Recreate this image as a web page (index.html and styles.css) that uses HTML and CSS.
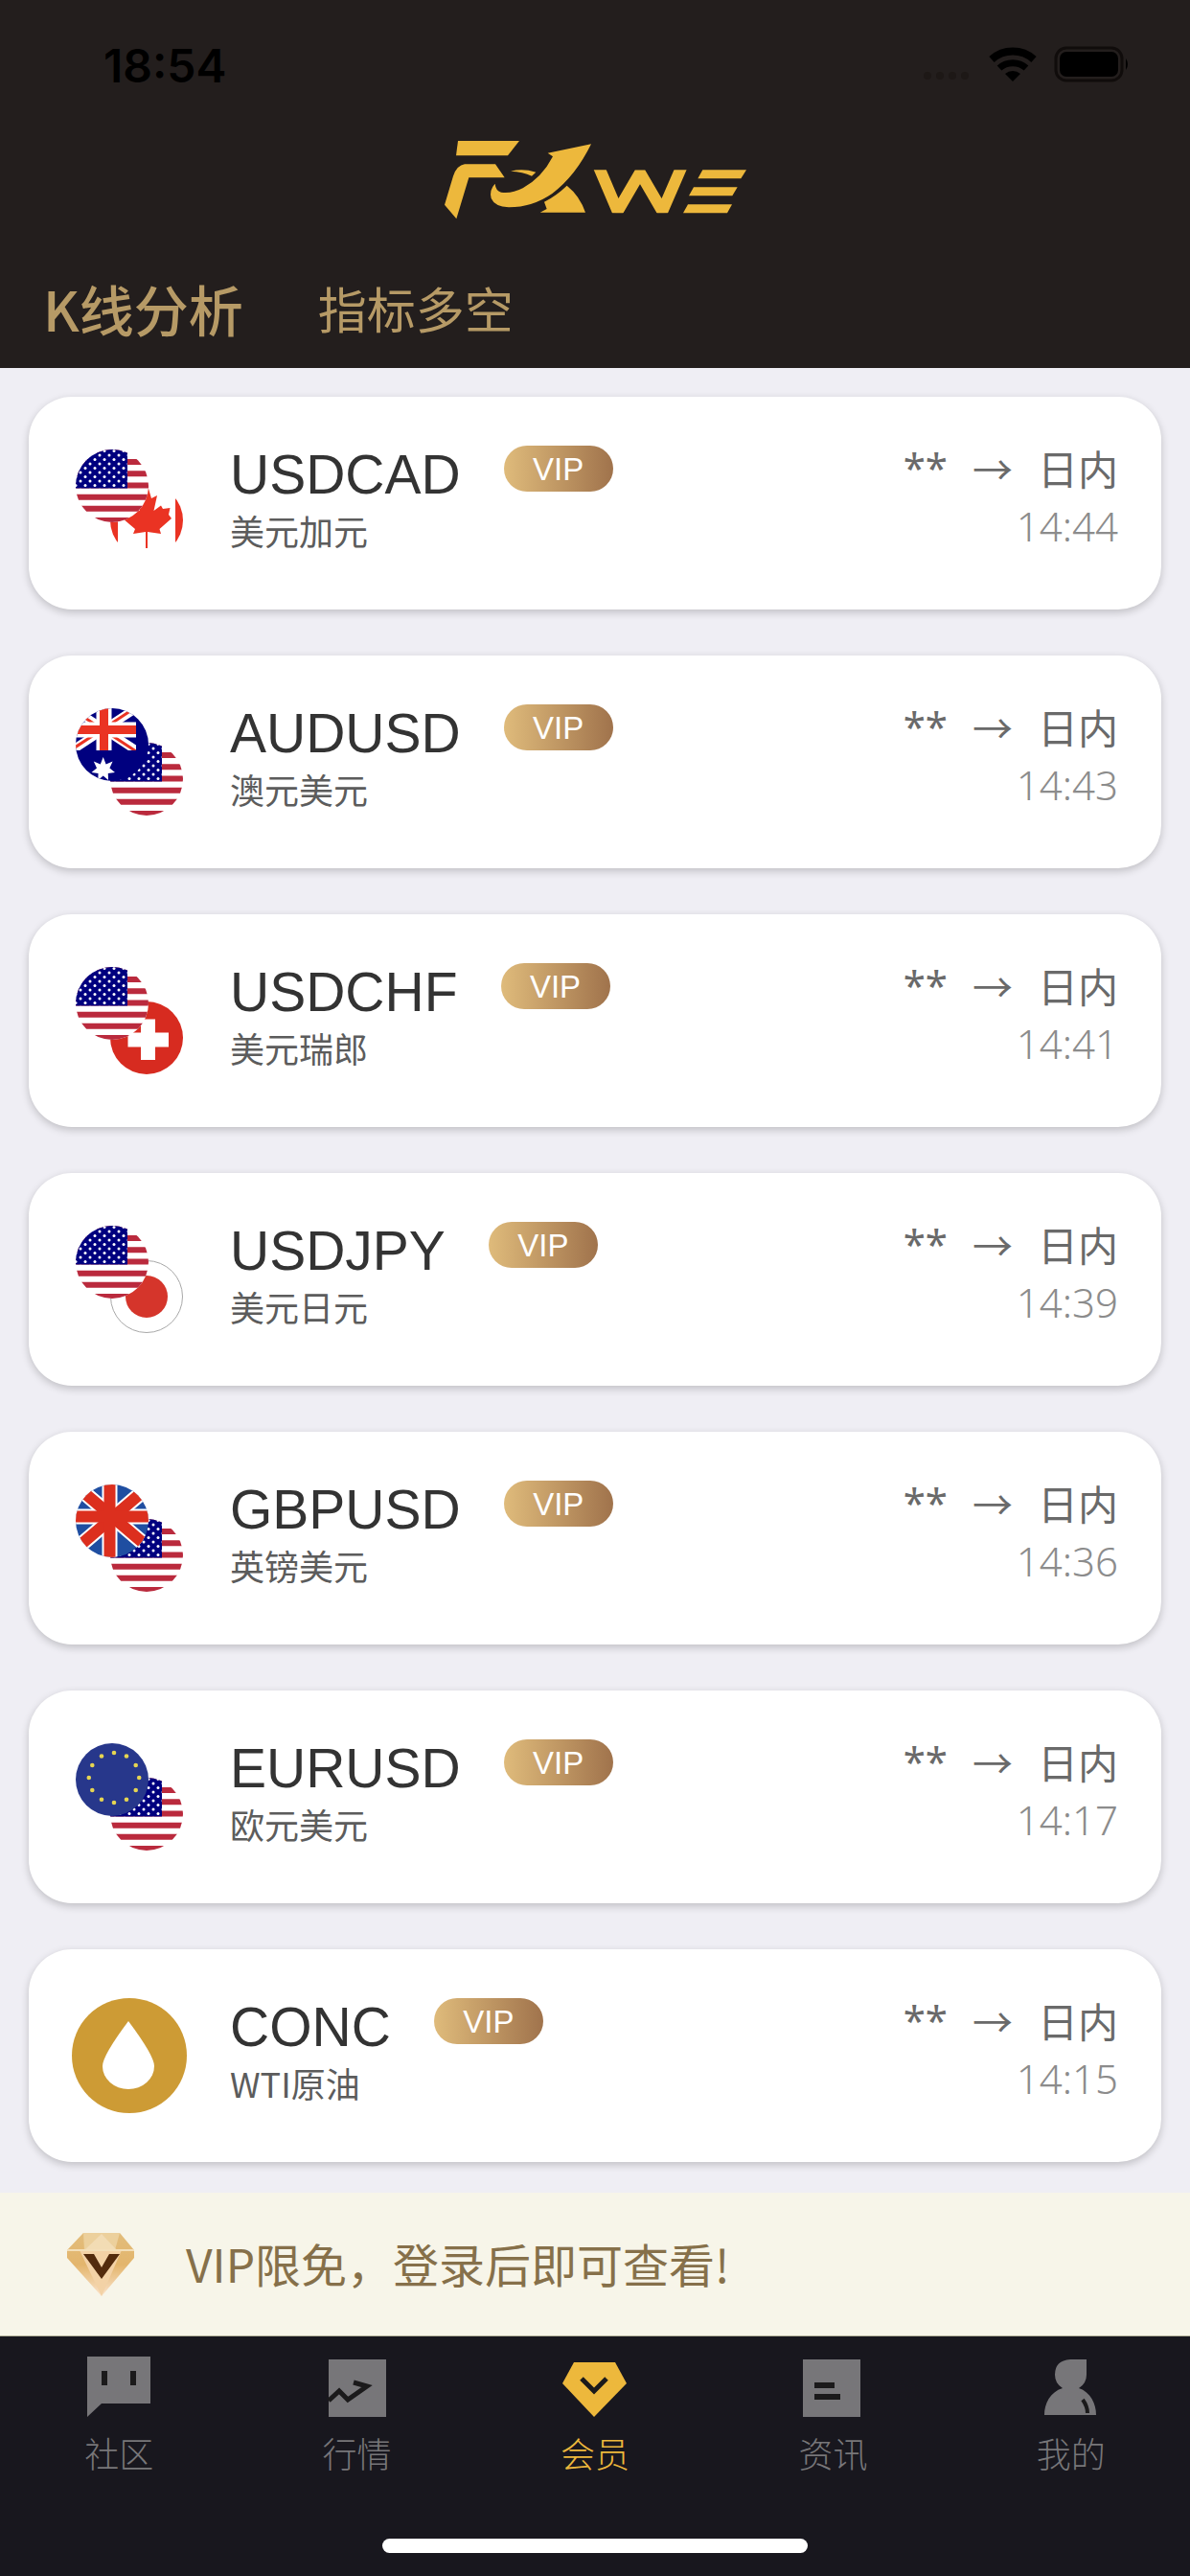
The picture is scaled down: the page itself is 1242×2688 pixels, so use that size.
FILE: index.html
```
<!DOCTYPE html>
<html lang="zh-CN">
<head>
  <meta charset="UTF-8" />
  <meta name="viewport" content="width=device-width, initial-scale=1" />
  <title>FXWE</title>
  <link rel="stylesheet" href="styles.css">
</head>
<body>

  <!-- Shared flags, every one is a 76x76 circle -->
  <svg class="defs" width="0" height="0" aria-hidden="true">
    <defs>
      <clipPath id="round"><circle cx="38" cy="38" r="38" /></clipPath>
      <clipPath id="canton"><rect x="0" y="0" width="63" height="44" /></clipPath>
      <clipPath id="band"><rect x="530" y="141" width="310" height="135" /></clipPath>
      <pattern id="stars" width="10" height="9" patternUnits="userSpaceOnUse">
        <circle cx="5" cy="6" r="1.5" fill="#fff" />
        <circle cx="0" cy="1.5" r="1.5" fill="#fff" />
        <circle cx="10" cy="1.5" r="1.5" fill="#fff" />
      </pattern>
      <linearGradient id="gold" x1="0" y1="0" x2="0" y2="1">
        <stop offset="0" stop-color="#e2bd7c" />
        <stop offset="0.5" stop-color="#e3b56c" />
        <stop offset="1" stop-color="#fbe3cb" />
      </linearGradient>
    </defs>
    <symbol id="us" viewBox="0 0 76 76">
      <g clip-path="url(#round)">
        <rect width="76" height="76" fill="#fff" />
        <path d="M0 1H76M0 13H76M0 25.300H76M0 37.500H76M0 49.700H76M0 61.700H76M0 74H76" stroke="#ba2a3d" stroke-width="6.100" />
        <rect width="54" height="40.500" fill="#00007f" />
        <rect width="54" height="40.500" fill="url(#stars)" />
      </g>
    </symbol>
    <symbol id="ca" viewBox="0 0 76 76">
      <g clip-path="url(#round)" fill="#ea3323">
        <rect width="76" height="76" fill="#fff" />
        <rect width="8" height="76" />
        <rect x="68" width="8" height="76" />
        <path d="M38 -2L43 15L49 12L45.500 28L53 22.500L55 26L62.500 25L61 32L64 36L51.500 47L53 52L39 50V67H37V50L24 52L26 47L13 36L16 32L14 25L22 26L24 22.500L31 28L28.500 12L33 15Z" />
      </g>
    </symbol>
    <symbol id="au" viewBox="0 0 76 76">
      <g clip-path="url(#round)">
        <rect width="76" height="76" fill="#00007f" />
        <g clip-path="url(#canton)">
          <path d="M-4 0L63 44M63 0L-4 44" stroke="#fff" stroke-width="9" />
          <path d="M-4 1L63 45M63 -1L-4 43" stroke="#ea3323" stroke-width="3" />
          <path d="M29.500 0V44M0 22.500H63" stroke="#fff" stroke-width="16" />
          <path d="M29.500 0V44M0 22.500H63" stroke="#ea3323" stroke-width="9" />
        </g>
        <path d="M28.700 51L31.600 58.500L38.600 55.500L35.400 62.500L41 67L33.800 68L34 75L28.700 70.500L23.400 75L23.500 68L16.500 67L22 62.500L18.800 55.500L25.800 58.500Z" fill="#fff" />
      </g>
    </symbol>
    <symbol id="ch" viewBox="0 0 76 76">
      <circle cx="38" cy="38" r="38" fill="#d72b20" />
      <path d="M39.500 18.500V61M18.500 40H61" stroke="#fff" stroke-width="15" />
    </symbol>
    <symbol id="jp" viewBox="0 0 76 76">
      <circle cx="38" cy="38" r="37.500" fill="#fff" stroke="#a8a8a8" />
      <circle cx="38" cy="38" r="22" fill="#d5352b" />
    </symbol>
    <symbol id="gb" viewBox="0 0 76 76">
      <g clip-path="url(#round)">
        <rect width="76" height="76" fill="#1f4ea1" />
        <path d="M-6 -4L82 71M80 -1L-10 76" stroke="#fff" stroke-width="16" />
        <path d="M35.500 0V76M0 33.500H76" stroke="#fff" stroke-width="16" />
        <path d="M-6 -4L82 71M80 -1L-10 76" stroke="#dc2f1e" stroke-width="12" />
        <path d="M35.500 0V76M0 33.500H76" stroke="#dc2f1e" stroke-width="12" />
      </g>
    </symbol>
    <symbol id="eu" viewBox="0 0 76 76">
      <circle cx="38" cy="38" r="38" fill="#27378b" />
      <g fill="#e6d552">
        <circle cx="40" cy="10" r="2.300" /><circle cx="53" cy="13.500" r="2.300" />
        <circle cx="62.700" cy="23" r="2.300" /><circle cx="66.200" cy="36" r="2.300" />
        <circle cx="62.700" cy="49" r="2.300" /><circle cx="53" cy="58.700" r="2.300" />
        <circle cx="40" cy="62" r="2.300" /><circle cx="27" cy="58.700" r="2.300" />
        <circle cx="17.300" cy="49" r="2.300" /><circle cx="13.800" cy="36" r="2.300" />
        <circle cx="17.300" cy="23" r="2.300" /><circle cx="27" cy="13.500" r="2.300" />
      </g>
    </symbol>
  </svg>

  <header class="header">
    <div class="status">
      <span class="clock">18:54</span>
      <svg class="status-icons" viewBox="0 0 224 42" aria-hidden="true">
        <g fill="#1d1816">
          <circle cx="13" cy="34" r="4" /><circle cx="26" cy="34" r="4" />
          <circle cx="39" cy="34" r="4" /><circle cx="52" cy="34" r="4" />
        </g>
        <g fill="none" stroke="#000">
          <path d="M80 17A33 33 0 0 1 124 17" stroke-width="8" />
          <path d="M88 26A21 21 0 0 1 116 26" stroke-width="7" />
        </g>
        <path d="M94 32A12 12 0 0 1 110 32L102 40Z" />
        <rect x="147" y="5" width="69" height="34" rx="11" fill="none" stroke="#100c0b" stroke-width="3" />
        <rect x="151" y="9" width="61" height="26" rx="7" />
        <path d="M220 16Q224 22 220 28Z" />
      </svg>
    </div>
    <div class="logo-row">
      <!-- brand mark -->
      <svg class="logo" viewBox="75 50 945 246" role="img" aria-label="FXWE">
        <g fill="#edb83c">
          <path d="M117 50H309L273 96H111Z" />
          <path d="M138 123H234L263 165H151L112 294L75 250L102 160Q114 126 138 123Z" />
          <path d="M282 145Q320 135 361 148L348 160Q320 146 282 145Z" />
          <path d="M534 60L398 88L414 99Q380 165 320 198Q285 216 252 211Q235 206 233 184Q214 204 221 230Q232 256 276 258Q350 258 412 215Q485 160 534 60Z" />
          <path d="M458 190Q498 222 516 274H374L395 263L387 241Q425 222 458 190Z" />
          <path d="M883 141H1020L1003 168H868ZM855 195H992L976 222H840ZM837 249H975L960 276H822Z" />
        </g>
        <path clip-path="url(#band)" d="M556 127L617 270L687 150L757 270L819 127" fill="none" stroke="#edb83c" stroke-width="36" stroke-linejoin="bevel" />
      </svg>
    </div>
    <nav class="tabs">
      <button class="tab active">K线分析</button>
      <button class="tab">指标多空</button>
    </nav>
  </header>

  <main class="list">
    <article class="card">
      <svg class="pair" viewBox="0 0 120 120"><use href="#ca" x="40" y="40" width="76" height="76" /><use href="#us" x="4" y="4" width="76" height="76" /></svg>
      <div class="info">
        <div class="title"><h2>USDCAD</h2><span class="vip">VIP</span></div>
        <p>美元加元</p>
      </div>
      <div class="signal">
        <div class="trend"><span class="mask">**</span><span>→</span><span>日内</span></div>
        <time>14:44</time>
      </div>
    </article>
    <article class="card">
      <svg class="pair" viewBox="0 0 120 120"><use href="#us" x="40" y="40" width="76" height="76" /><use href="#au" x="4" y="4" width="76" height="76" /></svg>
      <div class="info">
        <div class="title"><h2>AUDUSD</h2><span class="vip">VIP</span></div>
        <p>澳元美元</p>
      </div>
      <div class="signal">
        <div class="trend"><span class="mask">**</span><span>→</span><span>日内</span></div>
        <time>14:43</time>
      </div>
    </article>
    <article class="card">
      <svg class="pair" viewBox="0 0 120 120"><use href="#ch" x="40" y="40" width="76" height="76" /><use href="#us" x="4" y="4" width="76" height="76" /></svg>
      <div class="info">
        <div class="title"><h2>USDCHF</h2><span class="vip">VIP</span></div>
        <p>美元瑞郎</p>
      </div>
      <div class="signal">
        <div class="trend"><span class="mask">**</span><span>→</span><span>日内</span></div>
        <time>14:41</time>
      </div>
    </article>
    <article class="card">
      <svg class="pair" viewBox="0 0 120 120"><use href="#jp" x="40" y="40" width="76" height="76" /><use href="#us" x="4" y="4" width="76" height="76" /></svg>
      <div class="info">
        <div class="title"><h2>USDJPY</h2><span class="vip">VIP</span></div>
        <p>美元日元</p>
      </div>
      <div class="signal">
        <div class="trend"><span class="mask">**</span><span>→</span><span>日内</span></div>
        <time>14:39</time>
      </div>
    </article>
    <article class="card">
      <svg class="pair" viewBox="0 0 120 120"><use href="#us" x="40" y="40" width="76" height="76" /><use href="#gb" x="4" y="4" width="76" height="76" /></svg>
      <div class="info">
        <div class="title"><h2>GBPUSD</h2><span class="vip">VIP</span></div>
        <p>英镑美元</p>
      </div>
      <div class="signal">
        <div class="trend"><span class="mask">**</span><span>→</span><span>日内</span></div>
        <time>14:36</time>
      </div>
    </article>
    <article class="card">
      <svg class="pair" viewBox="0 0 120 120"><use href="#us" x="40" y="40" width="76" height="76" /><use href="#eu" x="4" y="4" width="76" height="76" /></svg>
      <div class="info">
        <div class="title"><h2>EURUSD</h2><span class="vip">VIP</span></div>
        <p>欧元美元</p>
      </div>
      <div class="signal">
        <div class="trend"><span class="mask">**</span><span>→</span><span>日内</span></div>
        <time>14:17</time>
      </div>
    </article>
    <article class="card">
      <svg class="pair" viewBox="0 0 120 120">
        <circle cx="60" cy="60" r="60" fill="#cd9b35" />
        <path d="M59 24Q86 60 86 71A27 24 0 0 1 32 71Q32 60 59 24Z" fill="#fff" />
      </svg>
      <div class="info">
        <div class="title"><h2>CONC</h2><span class="vip">VIP</span></div>
        <p>WTI原油</p>
      </div>
      <div class="signal">
        <div class="trend"><span class="mask">**</span><span>→</span><span>日内</span></div>
        <time>14:15</time>
      </div>
    </article>
  </main>

  <a class="banner" href="#login">
    <svg class="gem" viewBox="0 0 70 66" aria-hidden="true">
      <path d="M17 0H55L70 18V26L36 66L0 26V18Z" fill="url(#gold)" />
      <path d="M17 0H55L50 18H18Z" fill="#ecd09c" />
      <path d="M36 1L52 18H18Z" fill="#f2dcb4" />
      <path d="M13 18H57L36 66Z" fill="#f3d2a6" />
      <path d="M0 18H70" stroke="#f3dfb9" stroke-width="2" />
      <path d="M17 22H28L36 36L44 22H55L36 48Z" fill="#532b0d" />
    </svg>
    <span>VIP限免，登录后即可查看!</span>
  </a>

  <footer class="tabbar">
    <nav class="menu">
      <a class="item" href="#community">
        <svg viewBox="0 0 72 72"><path d="M3 5H69V54H18L3 68Z" /><path class="cut" d="M21 20V35M51 20V35" /></svg>
        <span>社区</span>
      </a>
      <a class="item" href="#market">
        <svg viewBox="0 0 72 72"><path d="M6 8H66V68H6Z" /><path class="cut line" d="M6 51L17 41L26 50L46 36L32 32" /></svg>
        <span>行情</span>
      </a>
      <a class="item current" href="#member">
        <svg viewBox="0 0 72 72"><path d="M14 11H57L69 33L35 68L2 33Z" /><path class="cut line" d="M22 28L35 41L48 28" /></svg>
        <span>会员</span>
      </a>
      <a class="item" href="#news">
        <svg viewBox="0 0 72 72"><path d="M5 8H65V68H5Z" /><path class="cut" d="M17 35H38M17 47H44" /></svg>
        <span>资讯</span>
      </a>
      <a class="item" href="#me">
        <svg viewBox="0 0 72 72"><path d="M35 8H52V24Q52 33 44 38C56 42 62 54 62 66H8C8 54 14 42 27 38Q19 33 19 24Q19 9 35 8Z" /><path class="cut thin" d="M48 50Q53 57 53 64" /></svg>
        <span>我的</span>
      </a>
    </nav>
    <div class="home-bar"></div>
  </footer>

</body>
</html>
```

FILE: styles.css
```
* {
  box-sizing: border-box;
}
body {
  margin: 0;
  min-height: 100vh;
  display: flex;
  flex-direction: column;
  background: #efeef4;
  font-family: "Noto Sans CJK SC", "Noto Sans", sans-serif;
  font-weight: 300;
}
h2,
p {
  margin: 0;
}
a {
  text-decoration: none;
}
.defs {
  position: absolute;
}

/* Header */
.header {
  background: #231e1d;
}
.status {
  display: flex;
  justify-content: space-between;
  align-items: flex-start;
  height: 132px;
  padding: 45px 63px 0 108px;
}
.clock {
  font-family: Inter, "Liberation Sans", sans-serif;
  font-size: 48px;
  font-weight: 600;
  line-height: 48px;
  color: #000;
}
.status-icons {
  width: 224px;
  height: 42px;
}
.logo-row {
  display: flex;
  justify-content: center;
  height: 132px;
  padding-top: 15px;
}
.logo {
  width: 315px;
  height: 82px;
}
.tabs {
  display: flex;
  align-items: center;
  gap: 78px;
  height: 120px;
  padding: 0 45px 6px;
}
.tab {
  padding: 0;
  border: 0;
  background: none;
  font-family: inherit;
  font-size: 51px;
  font-weight: 400;
  line-height: 60px;
  color: #b69a66;
  cursor: pointer;
}
.tab.active {
  font-size: 57px;
  font-weight: 500;
}

/* Cards */
.list {
  flex: 1;
  display: flex;
  flex-direction: column;
  gap: 48px;
  padding: 30px 30px 32px;
}
.card {
  display: flex;
  gap: 45px;
  padding: 51px 45px;
  background: #fff;
  border-radius: 45px;
  box-shadow: 0 3px 9px rgba(0, 0, 0, 0.2);
}
.pair {
  flex: none;
  width: 120px;
  height: 120px;
}
.info {
  flex: 1;
}
.title {
  display: flex;
  align-items: flex-start;
  gap: 45px;
}
.title h2 {
  font-family: "Liberation Sans", Arial, sans-serif;
  font-size: 57px;
  font-weight: 400;
  line-height: 60px;
  color: #333;
}
.vip {
  width: 114px;
  height: 48px;
  border-radius: 24px;
  background: linear-gradient(90deg, #dfbb7b, #a0734c);
  font-family: "Liberation Sans", Arial, sans-serif;
  font-size: 33px;
  line-height: 50px;
  text-align: center;
  color: #fff;
}
.info p {
  margin-top: 4px;
  font-size: 36px;
  font-weight: 400;
  line-height: 48px;
  color: #5c5c5c;
}
.signal {
  font-size: 42px;
  font-weight: 400;
  line-height: 46px;
  text-align: right;
}
.trend {
  display: flex;
  justify-content: flex-end;
  gap: 26px;
  color: #6a6a6a;
}
.mask,
.signal time {
  font-family: "Noto Sans", sans-serif;
}
.signal time {
  display: block;
  margin-top: 15px;
  font-weight: 300;
  color: #8c8c8c;
}

/* VIP notice */
.banner {
  display: flex;
  align-items: center;
  gap: 54px;
  height: 150px;
  padding: 0 70px;
  background: #f7f5e9;
  border-bottom: 1px solid #b5b49c;
  font-size: 48px;
  font-weight: 400;
  line-height: 60px;
  color: #86704a;
}
.banner span {
  padding-bottom: 4px;
}
.gem {
  width: 70px;
  height: 66px;
}

/* Bottom bar */
.tabbar {
  padding: 16px 0 24px;
  background: #18171e;
}
.menu {
  display: flex;
}
.item {
  flex: 1;
  display: flex;
  flex-direction: column;
  align-items: center;
  gap: 6px;
  font-size: 36px;
  line-height: 54px;
  color: #777679;
}
.item.current {
  color: #edb83c;
}
.item svg {
  width: 72px;
  height: 72px;
  fill: currentColor;
}
.item .cut {
  fill: none;
  stroke: #1b1a1b;
  stroke-width: 6;
}
.item .line {
  stroke-width: 5;
}
.item .thin {
  stroke-width: 4;
}
.home-bar {
  width: 444px;
  height: 15px;
  margin: 63px auto 0;
  border-radius: 8px;
  background: #fff;
}
```
